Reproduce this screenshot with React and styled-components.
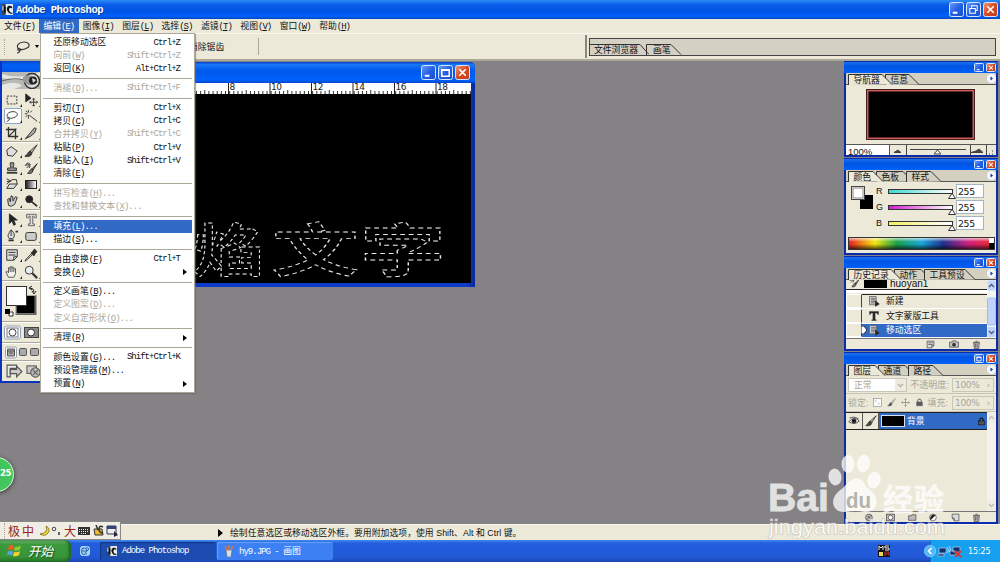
import React from 'react'
import styled, { createGlobalStyle } from 'styled-components';

const MENUS = [['文件', 'F'], ['编辑', 'E'], ['图像', 'I'], ['图层', 'L'], ['选择', 'S'], ['滤镜', 'T'], ['视图', 'V'], ['窗口', 'W'], ['帮助', 'H']];

// label, mnemonic, tail, shortcut, flags (d disabled, a active, m submenu)
const EDIT_MENU = [
    ['还原移动选区', '', '', 'Ctrl+Z'],
    ['向前', 'W', '', 'Shift+Ctrl+Z', 'd'],
    ['返回', 'K', '', 'Alt+Ctrl+Z'],
    null,
    ['消褪', 'D', '...', 'Shift+Ctrl+F', 'd'],
    null,
    ['剪切', 'T', '', 'Ctrl+X'],
    ['拷贝', 'C', '', 'Ctrl+C'],
    ['合并拷贝', 'Y', '', 'Shift+Ctrl+C', 'd'],
    ['粘贴', 'P', '', 'Ctrl+V'],
    ['粘贴入', 'I', '', 'Shift+Ctrl+V'],
    ['清除', 'E', '', ''],
    null,
    ['拼写检查', 'H', '...', '', 'd'],
    ['查找和替换文本', 'X', '...', '', 'd'],
    null,
    ['填充', 'L', '...', '', 'a'],
    ['描边', 'S', '...', ''],
    null,
    ['自由变换', 'F', '', 'Ctrl+T'],
    ['变换', 'A', '', '', 'm'],
    null,
    ['定义画笔', 'B', '...', ''],
    ['定义图案', 'D', '...', '', 'd'],
    ['定义自定形状', 'O', '...', '', 'd'],
    null,
    ['清理', 'R', '', '', 'm'],
    null,
    ['颜色设置', 'G', '...', 'Shift+Ctrl+K'],
    ['预设管理器', 'M', '...', ''],
    ['预置', 'N', '', '', 'm'],
];

const CHANNELS = [['R', '#40d8d0'], ['G', '#d020d0'], ['B', '#f4f060']];

const ICONS = {
    marquee: <rect x="2.5" y="3.5" width="11" height="9" strokeDasharray="2.2 1.4" />,
    move: <><path d="M2 1v9l6-4z" fill="#222" /><path d="M11 6v9M6.500 10.500h9M9.500 7.500L11 6l1.500 1.500M9.500 13.500L11 15l1.500-1.500M8 9l-1.500 1.500L8 12M14 9l1.500 1.500L14 12" /></>,
    lasso: <path d="M4 10C0 7 4 3 9 3s7 4 3 6-6 2-7 1-3 0-2 1 3-1 2 1-2 2-3 2" />,
    wand: <path d="M6 7l9 7M5 1v3M5 7v4M1 5.500h3M7 4l2-2M2 2l2 2M2 9l2-2" />,
    crop: <path d="M4 1v11h11M1 4h11v11M5 11l8-8" strokeWidth="1.5" />,
    slice: <><path d="M2 14L12 2l2 1-2 5-5 4z" fill="#aaa" /><path d="M1 15l4-3" /></>,
    heal: <path d="M2 7l5-4 7 5-5 6-6-1z" fill="#ddd" />,
    brush: <><path d="M15 1L7 8l2 2z" fill="#ccc" /><path d="M7 8c-3 1-2 4-6 6 4 1 8 0 8-4z" fill="#444" /></>,
    stamp: <><path d="M6 2h4v3L9 8h4v3H3V8h4L6 5z" fill="#999" /><path d="M2 13.500h12" strokeWidth="2" /></>,
    history: <><path d="M15 3l-6 6 1 2zM9 9c-3 1-2 3-5 5 3 1 6 0 6-3z" fill="#777" /><path d="M2 4c4-4 6 0 4 4M1 5l5-1M3 8l4-4" /></>,
    eraser: <><path d="M5 8h9l-4 5H2z" fill="#ddd" /><path d="M2 8l6-5h5l1 5M2 2l5 3M2 5h4" /></>,
    smudge: <path d="M4 13l-1-7 2-1 1 4 1-7 2 1v5l3-5 2 1-3 8-4 2-3-1z" fill="#ccc" />,
    dodge: <><circle cx="6" cy="6" r="4" fill="#222" /><path d="M9 9l6 5" strokeWidth="2" /></>,
    pathsel: <path d="M5 1v11l3-3 2 5 2-1-2-5h4z" fill="#222" />,
    type: <path d="M3 1.500h11v4h-2l-1-2h-1v9h2v2H5v-2h2v-9H6l-1 2H3z" fill="#ddd" stroke="#666" />,
    pen: <><path d="M7 1c5 4 4 8 2 10H5C2 8 4 5 7 1zM7 1v7" fill="#ddd" /><path d="M4 13h6M12 3h3" strokeWidth="2" /></>,
    shape: <rect x="2" y="4" width="12" height="9" rx="2" fill="#ccc" />,
    note: <path d="M2 2h12v8l-4 4H2zM14 10h-4v4M4 5h8M4 8h8" fill="#ddd" />,
    dropper: <><path d="M9 6l3-4 2 2-3 4z" fill="#222" strokeWidth="2" /><path d="M8 5l4 4M9 6l-6 6-2 3 3-2 6-6" /></>,
    hand: <path d="M4 14l-3-6 1-1 2 2V3l2 1V2h2v2l1-2 1 1v2l2-1v6l-2 4zM6 4v4M8 4v4M10 5v3" fill="#f4f4ee" stroke="#555" />,
    zoom: <><circle cx="6" cy="6" r="4.500" fill="#e8f0f0" /><path d="M9.500 9.500L15 15" strokeWidth="2.500" /></>,
    doc: <><path d="M2 2h9v11H2zM4 4.500h6M4 6.500h6M4 8.500h6M4 10.500h5" fill="#ccc" stroke="#666" /><path d="M10 8v7l5-3z" fill="#222" /></>,
    bigT: <path d="M2 2h12v4h-1l-1-2H9.500v9H11v1H5v-1h1.500V4H4L3 6H2z" fill="#222" strokeWidth="0.500" />,
    camera: <><path d="M1 5h4l1-2h5l1 2h3v8H1z" fill="#ccc" /><circle cx="8" cy="9" r="2.500" fill="#333" /></>,
    trash: <path d="M3 5h10l-1 10H4zM2 4h12M6 2h4M6 7v6M9 7v6" fill="#bbb" />,
    newdoc: <path d="M2 2h12v12H6V9H2zM2 9l4 5" fill="#ddd" />,
    folder: <path d="M1 5h5l1-2h7v10H1z" fill="#bbb" />,
    mask: <><rect x="1" y="2" width="14" height="12" fill="#bbb" /><circle cx="8" cy="8" r="4" fill="#fff" /></>,
    adjust: <><circle cx="7" cy="8" r="6" fill="#fff" /><path d="M3 12A6 6 0 0 1 11 4z" fill="#111" /></>,
    fx: <><circle cx="7" cy="8" r="6" fill="#bbb" /><path d="M3 12l8-8M5 5l5 6" /></>,
    lock: <><path d="M5 7V4q3-4 6 0v3" strokeWidth="1.800" /><rect x="3" y="7" width="10" height="7" fill="#555" /></>,
    eye: <><path d="M1 9q7-8 14-1-6 6-14 1zM2 4q6-3 12 1" fill="#fff" /><circle cx="8" cy="8" r="2.800" fill="#111" /></>,
    cross: <path d="M8 1v14M1 8h14M6 3l2-2 2 2M6 13l2 2 2-2M3 6L1 8l2 2M13 6l2 2-2 2" />,
    checker: <><rect x="1" y="1" width="14" height="14" fill="#fff" /><path d="M3 3h4v4H3zM8 8h4v4H8z" fill="#ddd" stroke="none" /></>,
    jump: <><path d="M1 2h9v3H4v8H1z" fill="#eee" /><path d="M4 6h6V3l5 5-5 5v-3H4z" fill="#ccc" /></>,
    flower: <><rect x="1" y="2" width="10" height="8" fill="#ccc" /><circle cx="10" cy="9" r="5" fill="#bbb" /><path d="M7 6l6 6M13 6l-6 6" /></>,
};

const Icon = ({ name, size = 13, color = '#333' }) => (
    <svg width={size} height={size} viewBox="0 0 16 16" fill="none" stroke={color} strokeWidth="1.100">{ICONS[name]}</svg>
)

const AppLogo = ({ size }) => (
    <svg width={size} height={size} viewBox="0 0 12 12">
        <rect width="12" height="12" fill="#dfe6ee" />
        <path d="M0 0h4v12H0z" fill="#345" />
        <path d="M2 2v7l2 1V3zM11 3C7 0 4 4 6 8q2 4 6 2L9 9Q7 7 8 5q1-2 3 0z" fill="#111" />
        <path d="M1 2v5M9 5v3" stroke="#fff" />
    </svg>
)

const WinButtons = ({ kinds, small }) => (
    <Buttons>
        {kinds.map((kind) => (
            <WinButton key={kind} $close={kind === 'close'} $small={small}>
                <svg width="100%" height="100%" viewBox="0 0 14 14" fill="none" stroke="#fff" strokeWidth="1.600">
                    {kind === 'min' && <path d="M3 10.500h5" strokeWidth="2.200" />}
                    {kind === 'max' && <path d="M3 4h8v7H3zM3 4.500h8" />}
                    {kind === 'restore' && <path d="M5 5V3h6v5H9M3 6h6v5H3z" strokeWidth="1.100" />}
                    {kind === 'close' && <path d="M3.500 3.500l7 7M10.500 3.500l-7 7" strokeWidth="1.900" />}
                </svg>
            </WinButton>
        ))}
    </Buttons>
)

const Mnemonic = ({ letter }) => letter ? <Latin>(<u>{letter}</u>)</Latin> : null

const Palette = ({ top, height, tabs, button = 'min', children }) => (
    <PaletteFrame $top={top} $height={height}>
        <PaletteTitle><WinButtons kinds={[button, 'close']} small /></PaletteTitle>
        <Tabs>
            {tabs.map(([label, width], i) => (
                <Tab key={label} $width={width} $on={i === 0}>
                    <svg width={width + 11} height="11" fill={i === 0 ? '#ece9d8' : '#d4d0c0'} stroke="#333"><path d={`M0.500 11V.5H${width - 2}L${width + 8} 10.500`} /></svg>
                    <span>{label}</span>
                </Tab>
            ))}
            <Flyout>
                <svg width="9" height="9"><circle cx="4.500" cy="4.500" r="4.500" fill="#f4f8ff" /><path d="M3.500 2.500v4l2.500-2z" fill="#103090" /></svg>
            </Flyout>
        </Tabs>
        {children}
    </PaletteFrame>
)

const Toolbox = () => {
    const group = (names, height) => (
        <ToolGroup $height={height}>
            {names.map((name, i) => <Tool key={name} $on={name === 'lasso'} $mark={i % 2 === 0}><Icon name={name} size={14} /></Tool>)}
        </ToolGroup>
    )
    return (
        <ToolFrame>
            <ToolTitle />
            <Banner>
                <svg width="38" height="17" viewBox="0 0 38 17">
                    <rect width="38" height="17" fill="#b8b8b4" />
                    <path d="M0 2q18 6 38-2v4Q18 10 0 6zM0 13q14-5 20 1l-8 3H0z" fill="#e6e6e2" />
                    <path d="M0 9q12-4 22-1" stroke="#666" fill="none" />
                    <circle cx="30" cy="9" r="7.500" fill="#ddd" stroke="#333" strokeWidth="1.500" />
                    <path d="M21 5q8-5 15 5-8 7-15-1z" fill="#999" />
                    <circle cx="31" cy="8.500" r="4" fill="#222" /><path d="M30 6l4 2-3 3z" fill="#ddd" />
                </svg>
            </Banner>
            {group(['marquee', 'move', 'lasso', 'wand', 'crop', 'slice'], 52)}
            {group(['heal', 'brush', 'stamp', 'history', 'eraser', 'grad', 'smudge', 'dodge'], 68)}
            {group(['pathsel', 'type', 'pen', 'shape'], 36)}
            {group(['note', 'dropper', 'hand', 'zoom'], 35)}
            <ToolGroup $height={41}>
                <svg width="36" height="37" viewBox="0 0 36 37">
                    <rect x="14" y="12.500" width="20" height="19" fill="#000" stroke="#666" />
                    <rect x="14" y="12.500" width="19" height="18" fill="none" stroke="#eee" strokeWidth=".5" />
                    <rect x="4.500" y="3.500" width="20" height="19" fill="#fff" stroke="#333" />
                    <path d="M28 5q4 0 4 4M30 3l-3 2 3 2M30 8l2 3 2-3" stroke="#222" fill="none" />
                    <path d="M7 29h4v4H7z" fill="#fff" stroke="#333" /><path d="M3 26h5v5H3z" fill="#000" />
                </svg>
            </ToolGroup>
            <ToolGroup $height={21}>
                <svg width="38" height="17" viewBox="0 0 38 17">
                    <rect x="2.500" y="2" width="16" height="13" rx="2" fill="#fff" stroke="#91a0b5" /><rect x="5" y="4" width="11" height="9" fill="#fff" stroke="#778" /><circle cx="10.500" cy="8.500" r="3.500" fill="#fff" stroke="#444" />
                    <rect x="22.500" y="3.500" width="14" height="10" fill="#888" stroke="#444" /><circle cx="29" cy="8.500" r="3.500" fill="#fff" stroke="#333" />
                </svg>
            </ToolGroup>
            <ToolGroup $height={18}>
                <svg width="38" height="14" viewBox="0 0 38 14" fill="#aaa" stroke="#555">
                    <rect x="3.500" y="2" width="11" height="11" rx="1.500" fill="#fff" stroke="#91a0b5" /><path d="M5.500 4h7v7h-7zM5.500 6h7M7 8h4" />
                    <rect x="17.500" y="3.500" width="7" height="7" rx="1" /><rect x="28.500" y="3.500" width="8" height="7" rx="1" />
                </svg>
            </ToolGroup>
            <JumpRow><Icon name="jump" size={17} color="#555" /><Icon name="flower" size={15} color="#555" /></JumpRow>
        </ToolFrame>
    )
}

const EditMenu = () => (
    <Dropdown>
        {EDIT_MENU.map((row, i) => {
            if (!row) return <Separator key={i} />
            const [label, letter, tail, shortcut, flag] = row
            return (
                <DropItem key={i} $flag={flag}>
                    <span>{label}<Mnemonic letter={letter} /><Latin>{tail}</Latin></span>
                    <Shortcut>{shortcut}</Shortcut>
                    {flag === 'm' && <svg width="4" height="6"><path d="M0 0v6l4-3z" fill="#000" /></svg>}
                </DropItem>
            )
        })}
    </Dropdown>
)

const Ruler = () => (
    <RulerBar>
        <svg width="428" height="11">
            {Array.from({ length: 103 }, (_, i) => {
                const x = 20.500 + i * 4.150 - 4
                const tall = (i % 10) === 5
                return <path key={i} d={`M${x} ${tall ? 7 : 8}V11`} stroke="#333" />
            })}
            {[8, 10, 12, 14, 16, 18].map((n, i) => (
                <g key={n}>
                    <path d={`M${185.500 + i * 41.500} 0V11`} stroke="#222" />
                    <text x={186.500 + i * 41.500} y="6.500" fontSize="9" fontFamily="DejaVu Sans" letterSpacing="-.6" fill="#222">{n}</text>
                </g>
            ))}
        </svg>
    </RulerBar>
)

const Document = () => (
    <DocFrame>
        <DocTitle><WinButtons kinds={['min', 'max', 'close']} /></DocTitle>
        <Ruler />
        <Canvas>
            <svg width="428" height="189" viewBox="43 94 428 189">
                <g fill="none" stroke="#e8e8e8" strokeWidth=".9" strokeDasharray="3.200 2.600" fontFamily="Noto Sans CJK SC, sans-serif" fontWeight="700" fontSize="58">
                    <text transform="translate(193 271) scale(1.220 .98)">焰</text>
                    <text transform="translate(272 271) scale(1.490 .98)">文</text>
                    <text transform="translate(360 271) scale(1.480 .98)">字</text>
                </g>
            </svg>
        </Canvas>
    </DocFrame>
)

const Navigator = () => (
    <Palette top={61} height={96} tabs={[['导航器', 36], ['信息', 26]]}>
        <NavBody><NavThumb /></NavBody>
        <NavFooter>
            <ZoomField><span>100%</span></ZoomField>
            <svg width="104" height="11" fill="#444" stroke="#444">
                <path d="M4 7.500h7L8 5zM16.500 0v11M80.500 0v11M81 7.500h12L89 4l-3 2z" />
                <path d="M20 4.500h56" /><path d="M44 9l3.500-4L51 9z" fill="#fff" />
                <path d="M96.500 0v11" /><path d="M99 9h1M102 9h1M102 6h1" />
            </svg>
        </NavFooter>
    </Palette>
)

const ColorPalette = () => (
    <Palette top={158} height={97} tabs={[['颜色', 27], ['色板', 29], ['样式', 27]]}>
        <ColorBody>
            <svg width="28" height="30">
                <rect x="14" y="12" width="13" height="14" fill="#000" /><rect x="5.500" y="3.500" width="13" height="13" fill="#fff" stroke="#444" />
                <rect x="7" y="5" width="10" height="10" fill="#fff" stroke="#888" />
            </svg>
            <Channels>
                {CHANNELS.map(([name, color]) => (
                    <Channel key={name}>
                        <span>{name}</span>
                        <Track $color={color}><svg width="8" height="6"><path d="M.5 5.500L4 .5l3.500 5z" fill="#fff" stroke="#333" /></svg></Track>
                        <Value>255</Value>
                    </Channel>
                ))}
            </Channels>
        </ColorBody>
        <Spectrum><i /></Spectrum>
    </Palette>
)

const Scroll = ({ thumb, height }) => (
    <ScrollBar>
        <svg width="9" height={height}>
            <rect width="9" height={height} fill={thumb ? '#f5f5f0' : '#f2f1ec'} />
            {thumb && <rect x=".5" y={height - 40} width="8" height="27" rx="1" fill="#c1d3fb" stroke="#a4bbf0" />}
            <rect x=".5" y=".5" width="8" height="10" rx="1" fill={thumb ? '#c1d3fb' : '#eeede5'} />
            <rect x=".5" y={height - 11} width="8" height="10" rx="1" fill={thumb ? '#c1d3fb' : '#eeede5'} />
            <path d={`M2 7l2.500-2.500L7 7M2 ${height - 7}l2.500 2.500L7 ${height - 7}`} fill="none" stroke={thumb ? '#4d6185' : '#c0bfb5'} strokeWidth="1.500" />
        </svg>
    </ScrollBar>
)

const History = () => (
    <Palette top={256} height={95} tabs={[['历史记录', 45], ['动作', 29], ['工具预设', 43]]}>
        <Split $height={58}>
            <List>
                <Snapshot><SnapBox><Icon name="history" size={11} /></SnapBox><b /><span>huoyan1</span></Snapshot>
                {[['doc', '新建'], ['bigT', '文字蒙版工具'], ['doc', '移动选区']].map(([icon, label], i) => (
                    <State key={label} $on={i === 2}><Check />{i === 2 && <Pointer><svg width="6" height="8"><path d="M0 0h3l3 4-3 4H0z" fill="#fff" stroke="#222" /></svg></Pointer>}<Icon name={icon} size={12} /><span>{label}</span></State>
                ))}
            </List>
            <Scroll thumb height={58} />
        </Split>
        <Footer $gap={12}><Icon name="note" size={9} /><Icon name="camera" size={10} /><Icon name="trash" size={9} /></Footer>
    </Palette>
)

const Layers = () => (
    <Palette top={352} height={172} button="max" tabs={[['图层', 29], ['通道', 29], ['路径', 27]]}>
        <LayerOptions>
            <Select><span>正常</span><svg width="9" height="12"><path d="M2 5l2.500 2.500L7 5" fill="none" stroke="#b8b5a8" strokeWidth="1.500" /></svg></Select>
            <Dim>不透明度:</Dim>
            <Percent>100%<i>›</i></Percent>
        </LayerOptions>
        <LayerOptions>
            <Dim>锁定:</Dim>
            <LockIcons><Icon name="checker" size={9} color="#888" /><Icon name="brush" size={9} color="#888" /><Icon name="cross" size={9} color="#777" /><Icon name="lock" size={9} color="#777" /></LockIcons>
            <Dim>填充:</Dim>
            <Percent>100%<i>›</i></Percent>
        </LayerOptions>
        <Split $height={99}>
            <List>
                <Layer>
                    <Cell><Icon name="eye" size={12} /></Cell>
                    <Cell><Icon name="brush" size={12} /></Cell>
                    <b /><span>背景</span><Icon name="lock" size={9} color="#111" />
                </Layer>
            </List>
            <Scroll height={99} />
        </Split>
        <Footer $gap={11}>{['fx', 'mask', 'folder', 'adjust', 'newdoc', 'trash'].map((name) => <Icon key={name} name={name} size={9} />)}</Footer>
    </Palette>
)

const Watermark = () => (
    <Mark>
        <svg width="190" height="100" viewBox="0 0 190 100" fill="#fff" fontFamily="Liberation Sans, sans-serif" fontWeight="700">
            <text x="3" y="66" fontSize="39" textLength="61" lengthAdjust="spacingAndGlyphs" stroke="#fff" strokeWidth=".8">Bai</text>
            <ellipse cx="70" cy="32" rx="6.500" ry="8.500" transform="rotate(-10 70 32)" />
            <ellipse cx="83" cy="19" rx="6.500" ry="9" />
            <ellipse cx="98.500" cy="18.500" rx="6.500" ry="9" transform="rotate(10 98.500 18.500)" />
            <ellipse cx="109" cy="35" rx="6.500" ry="8.500" transform="rotate(15 109 35)" />
            <path d="M91 33q7 0 10 9 12 7 10.500 16-2 10-12 9-9-2-18 0-12 1-13.500-9 0-9 10-15 6-8 13-10z" />
            <text x="81" y="63" fontSize="22" fill="#a3a29e" textLength="25" lengthAdjust="spacingAndGlyphs">du</text>
            <text x="118" y="65" fontSize="30" fontFamily="Noto Sans CJK SC, sans-serif" textLength="61" stroke="#fff" strokeWidth=".6">经验</text>
            <text x="4" y="89" fontSize="20" fontWeight="400" textLength="176" lengthAdjust="spacingAndGlyphs" stroke="#bbb8b0" strokeWidth="1.200" paintOrder="stroke">jingyan.baidu.com</text>
        </svg>
    </Mark>
)

const InputBar = () => (
    <Ime>
        <Grip />
        <ImeText $color="#8c2a20">极</ImeText>
        <ImeText $color="#9a2018">中</ImeText>
        <svg width="84" height="14" viewBox="0 0 84 14">
            <path d="M10 2q3 7-6 8 5 3 8-1t-2-7z" fill="#f4dc40" stroke="#665500" strokeWidth=".7" />
            <circle cx="18" cy="5" r="1.800" fill="none" stroke="#444" /><path d="M23 8v3" stroke="#333" strokeWidth="1.500" />
            <text x="28" y="11.500" fontSize="12" fill="#9a2018" fontFamily="Noto Sans CJK SC">大</text>
            <rect x="42" y="3" width="12" height="8" fill="#333" /><path d="M43 5.500h10M43 7.500h10M45 9.500h6" stroke="#eee" strokeDasharray="1 1" />
            <path d="M58 5h8l1 6h-8z" fill="#e8ba38" stroke="#333" /><path d="M60 1l2 5M67 3q-4-2-4 2t4 4" stroke="#333" fill="none" strokeWidth="1.500" />
            <path d="M71 2h9v8h-9z" fill="#eee" stroke="#335" /><path d="M71 2h9v3h-9z" fill="#347" /><path d="M78 7v6l4-2z" fill="#223" />
        </svg>
    </Ime>
)

const App = () => (
    <Screen>
        <Reset />
        <TitleBar><AppLogo size={11} /><b>Adobe Photoshop</b><WinButtons kinds={['min', 'restore', 'close']} /></TitleBar>
        <MenuBar>
            {MENUS.map(([label, letter]) => <MenuItem key={label} $on={letter === 'E'}>{label}<Mnemonic letter={letter} /></MenuItem>)}
        </MenuBar>
        <Options>
            <OptionTool><Grip /><Icon name="lasso" size={16} /><svg width="4" height="3"><path d="M0 0h4L2 3z" /></svg></OptionTool>
            <OptionText>消除锯齿</OptionText>
            <Well>
                <WellTab>文件浏览器</WellTab>
                <svg width="9" height="11" stroke="#333" fill="none"><path d="M0 .5l9 10M6.500 11V.5H9" /></svg>
                <WellTab>画笔</WellTab>
                <svg width="11" height="11" stroke="#333" fill="none"><path d="M0 .5l10 10" /></svg>
            </Well>
        </Options>
        <Workspace />
        <Status>
            <svg width="5" height="8"><path d="M0 0v8l5-4z" /></svg>
            <span>绘制任意选区或移动选区外框。要用附加选项，使用 Shift、Alt 和 Ctrl 键。</span>
        </Status>
        <Taskbar>
            <Start>
                <svg width="15" height="14" viewBox="0 0 15 14"><path d="M2 2q3-2 5 0L6 6Q4 5 1 6z" fill="#f05a28" /><path d="M8 2.500q3 1 6-1l-1 4q-3 2-6 1z" fill="#8ccc30" /><path d="M1 7.500q3-1 5 0l-1 4Q3 10 0 11z" fill="#58a4f8" /><path d="M7 8q3 1 6-1l-1 4q-3 2-6 1z" fill="#fcd430" /></svg>
                <span>开始</span>
            </Start>
            <Quick><svg width="12" height="12"><rect x="1" y="1" width="10" height="10" rx="3" fill="#a8d4f8" /><path d="M3 6h5q0-3-3-3T2.500 6.500 5 9.500t3-1M7 2l3 2-4 4" stroke="#2860b0" fill="none" /></svg></Quick>
            <Task $on><AppLogo size={10} /><span>Adobe Photoshop</span></Task>
            <Task>
                <svg width="10" height="12"><path d="M2 5h6l-1 7H3z" fill="#d8e0e8" stroke="#555" strokeWidth=".5" /><path d="M3 5L1 1M5 5V0M7 5l2-4" stroke="#e07838" strokeWidth="1.500" /></svg>
                <span>hy9.JPG - <em>画图</em></span>
            </Task>
            <MsIcon><svg width="12" height="12" viewBox="0 0 12 12"><path d="M0 0h12v12H0z" fill="#111" /><path d="M1 5V1l2 2 2-2v4M11 1H7v2h4v2H7" stroke="#eee" fill="none" /><path d="M1 7h4v4H1z" fill="#e8d860" /><path d="M7 11V7h4v4M7 9h4" stroke="#c03030" fill="none" /></svg></MsIcon>
            <Tray>
                <svg width="12" height="14"><circle cx="6" cy="7" r="5.800" fill="#54b8f8" stroke="#b8e4ff" strokeWidth=".5" /><path d="M7.500 4L4.500 7l3 3" stroke="#fff" strokeWidth="1.600" fill="none" /></svg>
                <svg width="27" height="13"><path d="M2 3h7v5H2zM1 9h6v2H1zM16 2h7v5h-7zM13 6h6v4h-6z" fill="#14306c" stroke="#b8c8e0" strokeWidth=".7" /><path d="M10 2q3 3 0 6M12 1q3 3 0 6" stroke="#dfefff" fill="none" strokeWidth=".7" /><path d="M18 6l6 6M24 6l-6 6" stroke="#f02818" strokeWidth="1.700" /></svg>
                <span>15:25</span>
            </Tray>
        </Taskbar>
        <Document />
        <Toolbox />
        <EditMenu />
        <Navigator />
        <ColorPalette />
        <History />
        <Layers />
        <Bubble>25</Bubble>
        <InputBar />
        <Watermark />
    </Screen>
)

export default App


const Reset = createGlobalStyle`
* { box-sizing: border-box; }
body { margin: 0; overflow: hidden; }
svg { display: block; flex: none; }
`;
const Screen = styled.div`
position: relative;
width: 1000px;
height: 562px;
overflow: hidden;
display: flex;
flex-direction: column;
background: #848284;
color: #111;
font: 8.8px/12px "Liberation Sans", "Noto Sans CJK SC", sans-serif;
white-space: nowrap;
`;
const TitleBar = styled.div`
height: 19px;
flex: none;
display: flex;
align-items: center;
padding-left: 2px;
gap: 3px;
background: linear-gradient(#2a8cf8, #0a5ce8 25%, #0054e4 60%, #0062fc 85%, #0046c0);
color: #fff;

b {
    font: bold 10.5px/14px "Liberation Mono", monospace;
    letter-spacing: -.5px;
    text-shadow: 1px 1px #0a3a90;
}
`;
const Buttons = styled.div`
margin-left: auto;
display: flex;
gap: 2px;
margin-right: 2px;
`;
const WinButton = styled.div`
width: ${(p) => p.$small ? '10px' : '15px'};
height: ${(p) => p.$small ? '9.5px' : '15px'};
border: ${(p) => p.$small ? '.5px' : '1px'} solid #d8e4fc;
border-radius: ${(p) => p.$small ? '1.5px' : '2.5px'};
background: ${(p) => p.$close ? 'linear-gradient(135deg, #f09878, #d84820 50%, #c04020)' : 'linear-gradient(135deg, #6c9cf8, #2460e4 50%, #1c50cc)'};
`;
const MenuBar = styled.div`
height: 14px;
flex: none;
display: flex;
background: #ece9d8;
`;
const MenuItem = styled.div`
width: 39.4px;
padding-left: 4px;
line-height: 14px;
background: ${(p) => p.$on ? '#316ac5' : 'none'};
color: ${(p) => p.$on ? '#fff' : '#111'};
`;
const Latin = styled.span`
font: 9px/12px "Liberation Mono", monospace;
letter-spacing: -.98px;
`;
const Options = styled.div`
height: 28px;
flex: none;
display: flex;
align-items: center;
background: #ece9d8;
border-top: 1px solid #f8f7f0;
border-bottom: 2px solid #aca899;
`;
const OptionTool = styled.div`
width: 184px;
display: flex;
align-items: center;
padding-left: 4px;
gap: 4px;

svg:nth-child(2) { margin-left: 4px; }
`;
const Grip = styled.div`
width: 3px;
height: 16px;
flex: none;
border-left: 1px dotted #aaa694;
`;
const OptionText = styled.div`
width: 403px;
height: 23px;
line-height: 25px;
padding-left: 5px;
border-right: 2px solid #8a887c;
background: linear-gradient(#aca899, #aca899) 74px 3px / 1px 17px no-repeat;
`;
const Well = styled.div`
margin: 0 4px 0 2px;
flex: 1;
height: 18px;
padding-top: 5px;
display: flex;
background: #d4d0c4;
border: 1px solid #444;
`;
const WellTab = styled.div`
padding: 0 0 0 4px;
width: ${(p) => p.children.length > 2 ? '50px' : '22px'};
line-height: 11px;
border-top: 1px solid #333;
height: 11px;
`;
const Workspace = styled.div`
flex: 1;
background: #848284;
`;
const Status = styled.div`
height: 16px;
flex: none;
display: flex;
align-items: center;
gap: 7px;
padding-left: 218px;
background: #ece9d8;
border-top: 1px solid #f8f7f0;

span { letter-spacing: .06px; }
`;
const Taskbar = styled.div`
height: 22px;
flex: none;
display: flex;
align-items: center;
background: linear-gradient(#4088f0, #245edc 15%, #2158d6 80%, #1c48b0);
color: #fff;
`;
const Start = styled.div`
width: 71px;
height: 22px;
display: flex;
align-items: center;
gap: 6px;
padding-left: 7px;
border-radius: 0 6px 6px 0;
background: linear-gradient(#70b870, #3c9a3c 20%, #389438 75%, #287428);
box-shadow: inset -2px 0 3px #1c6020;

span {
    font: italic 12.5px/18px "Noto Sans CJK SC", sans-serif;
    text-shadow: 1px 1px 1px #184818;
}
`;
const Quick = styled.div`
width: 29px;
padding-left: 8px;
`;
const Task = styled.div`
width: 116px;
height: 18px;
margin-right: 1px;
display: flex;
align-items: center;
gap: 5px;
padding-left: 7px;
border-radius: 2px;
background: ${(p) => p.$on ? '#1c4cb0' : '#3c80f4'};
box-shadow: ${(p) => p.$on ? 'inset 1px 1px 1px #103480' : 'inset 1px 1px 1px #68a4fc'};
font: 9px/12px "Liberation Mono", monospace;
letter-spacing: -.98px;

em { font: 8.8px "Noto Sans CJK SC", sans-serif; letter-spacing: 0; }
`;
const MsIcon = styled.div`
margin-left: auto;
`;
const Tray = styled.div`
width: 76px;
height: 22px;
margin-left: 34px;
display: flex;
align-items: center;
gap: 1px;
background: linear-gradient(90deg, transparent 6px, #0a3c9c 6px, transparent 7px), linear-gradient(90deg, transparent 6px, #18a0f0 6px);

span { font: 8px "DejaVu Sans", sans-serif; margin-left: 3px; letter-spacing: -.1px; }
`;

// floating windows
const DocFrame = styled.div`
position: absolute;
left: 40px;
top: 62px;
width: 435px;
height: 225px;
display: flex;
flex-direction: column;
padding: 0 4px 4px 3px;
background: linear-gradient(90deg, #0c3cc8 98%, #0828a0);
border-radius: 5px 5px 0 0;
`;
const DocTitle = styled.div`
height: 21px;
margin: 0 -4px 0 -3px;
flex: none;
display: flex;
align-items: center;
padding-right: 3px;
border-radius: 5px 5px 0 0;
background: linear-gradient(#0a3cc0, #1878f8 12%, #0058ec 40%, #0062fc 85%, #0048d0);
`;
const RulerBar = styled.div`
height: 11px;
flex: none;
background: #fff;
overflow: hidden;
`;
const Canvas = styled.div`
height: 189px;
overflow: hidden;
background: #000;
`;
const ToolFrame = styled.div`
position: absolute;
left: 0;
top: 61px;
width: 42px;
height: 322px;
padding: 0 2px;
display: flex;
flex-direction: column;
background: #ece9d8;
border: solid #0a34c0;
border-width: 0 0 2px 2px;
`;
const ToolTitle = styled.div`
height: 11px;
margin: 0 -2px;
flex: none;
background: linear-gradient(#0848c8, #0060f8 40%, #0054e8);
`;
const Banner = styled.div`
height: 18px;
margin: 0 -2px;
flex: none;
`;
const ToolGroup = styled.div`
height: ${(p) => p.$height}px;
margin: 0 -2px;
padding: 1px 0 0;
display: flex;
flex: none;
flex-wrap: wrap;
align-content: space-evenly;
border-bottom: 1px solid #aca899;
box-shadow: 0 1px #fff;
`;
const Tool = styled.div`
width: 18px;
height: 16px;
margin-left: ${(p) => p.$mark ? '2px' : '1px'};
padding-left: 1px;
display: flex;
align-items: center;
justify-content: center;
border: 1px solid ${(p) => p.$on ? '#90a8c8' : 'transparent'};
border-radius: 2px;
background: ${(p) => p.$on ? '#fff' : 'none'};

/* gradient tool has no drawing of its own */
svg:empty {
    width: 12px;
    height: 9px;
    border: 1px solid #222;
    background: linear-gradient(90deg, #222, #fff);
}
&::after {
    content: '';
    align-self: flex-end;
    margin-left: -2px;
    border: solid transparent;
    border-width: 3px 0 0 3px;
    border-bottom: 0;
    border-right: 2px solid #222;
}
`;
const JumpRow = styled.div`
display: flex;
align-items: center;
gap: 3px;
padding-left: 2px;
flex: 1;
`;
const Dropdown = styled.div`
position: absolute;
left: 40px;
top: 33px;
width: 155px;
height: 360px;
padding: 2px 2px 0;
background: #fff;
border: 1px solid #aca899;
box-shadow: 1px 1px 1px #6668;
`;
const DropItem = styled.div`
height: 13.15px;
display: flex;
align-items: center;
padding: 0 4px 0 10.5px;
color: ${(p) => ({ d: '#aca899', a: '#fff' })[p.$flag] || '#111'};
background: ${(p) => p.$flag === 'a' ? '#316ac5' : 'none'};
`;
const Shortcut = styled(Latin)`
margin-left: auto;
margin-right: 8px;

& + svg { margin-right: 1px; }
`;
const Separator = styled.div`
height: 6.5px;
padding: 0;
background: linear-gradient(#aca899, #aca899) 0 3px / 100% 1px no-repeat;
`;
const PaletteFrame = styled.div`
position: absolute;
left: 844px;
top: ${(p) => p.$top}px;
width: 154px;
height: ${(p) => p.$height}px;
display: flex;
flex-direction: column;
background: #ece9d8;
border: solid #0a2ca8;
border-width: 1px 2px 2px;
`;
const PaletteTitle = styled.div`
height: 11px;
flex: none;
display: flex;
align-items: center;
margin: 0 -2px;
background: linear-gradient(#1c70f0, #0054e4 40%, #0060f8);
`;
const Tabs = styled.div`
height: 12px;
flex: none;
display: flex;
padding: 1px 0 0 2px;
background: #d4d0c0;
border-bottom: 1px solid #555;
`;
const Tab = styled.div`
position: relative;
width: ${(p) => p.$width}px;
height: 11px;
margin-right: 1px;
z-index: ${(p) => p.$on ? 2 : 1};

span {
    position: absolute;
    left: 5.5px;
    top: 0;
    line-height: 12px;
}
`;
const Flyout = styled.div`
margin-left: auto;
`;
const NavBody = styled.div`
flex: 1;
display: flex;
align-items: center;
justify-content: center;
`;
const NavThumb = styled.div`
width: 109px;
height: 51px;
margin: 0 0 0 -1px;
background: #000;
border: 1px solid #402020;
box-shadow: inset 0 0 0 1.5px #d05858;
`;
const NavFooter = styled.div`
height: 11px;
flex: none;
display: flex;
border-top: 1px solid #555;
overflow: hidden;
`;
const ZoomField = styled.div`
width: 44px;
background: #fff;
border-right: 1px solid #555;
padding-left: 2px;
font-size: 9.5px;
line-height: 13px;
`;
const ColorBody = styled.div`
flex: 1;
display: flex;
padding-top: 1px;
`;
const Channels = styled.div`
flex: 1;
`;
const Channel = styled.div`
height: 16.2px;
display: flex;
align-items: center;
font-size: 9px;

> span { width: 14px; padding-left: 2px; }
`;
const Track = styled.div`
width: 65px;
height: 5px;
border: 1px solid #333;
background: linear-gradient(90deg, ${(p) => p.$color}, #fff);

svg { margin: 3px 0 0 59px; }
`;
const Value = styled.div`
width: 28px;
height: 14px;
margin-left: 3px;
padding-left: 1px;
font: 9.3px/13px "DejaVu Sans", sans-serif;
letter-spacing: -.3px;
background: #fff;
border: 1px solid #a0b4c4;
`;
const Spectrum = styled.div`
height: 13px;
margin: 0 1px 3px 2px;
border: 1px solid #333;
background: linear-gradient(#fffa, #fff0 35%, #0000 55%, #000a), linear-gradient(90deg, #e82020, #f4e810 18%, #18a048 33%, #18a8d8 50%, #203090 65%, #d02080 82%, #f02828);

i {
    display: block;
    margin-left: auto;
    width: 5px;
    height: 11px;
    background: linear-gradient(#fff 45%, #000 45%);
}
`;
const Split = styled.div`
height: ${(p) => p.$height}px;
flex: none;
display: flex;
`;
const List = styled.div`
flex: 1;
`;
const ScrollBar = styled.div`
width: 9px;
`;
const Snapshot = styled.div`
height: 14.5px;
display: flex;
align-items: flex-start;
border-bottom: 1.5px solid #222;
background: linear-gradient(#222, #222) 0 9px / 100% 1px no-repeat, linear-gradient(#fff, #fff) 0 10px / 100% 3px no-repeat;
overflow: hidden;

b { width: 23px; height: 8px; background: #000; margin: 0 3px 0 2px; }
span { font: 10px/9px "Liberation Sans", sans-serif; margin-top: -1px; }
`;
const SnapBox = styled.div`
width: 16px;
height: 11px;
padding-left: 3px;
margin-top: -3px;
`;
const State = styled.div`
position: relative;
height: 14.5px;
display: flex;
align-items: center;
border-bottom: 1px solid #fff;
background: ${(p) => p.$on ? '#316ac5' : '#ece9d8'};
color: ${(p) => p.$on ? '#fff' : '#111'};

> svg { margin: 0 6px 0 6px; }
`;
const Pointer = styled.div`
width: 6px;
margin: 0 -5px 0 -1px;
`;
const Check = styled.div`
width: 16px;
height: 14px;
background: #ece9d8;
border: 1px solid #fff;
border-right: 1px solid #444;
`;
const Footer = styled.div`
flex: 1;
display: flex;
align-items: center;
justify-content: flex-end;
gap: ${(p) => p.$gap + 1.5}px;
padding-right: 15px;
border-top: 1px solid #777;
`;
const LayerOptions = styled.div`
height: 18px;
flex: none;
display: flex;
align-items: center;
justify-content: space-between;
padding: 0 2px;
border-bottom: 1px solid #c8c4b4;
`;
const Select = styled.div`
width: 59px;
height: 14px;
display: flex;
justify-content: space-between;
padding: 0 1px 0 5px;
background: linear-gradient(90deg, #fff 46px, #eeebdf 46px);
border: 1px solid #c8c6b8;
color: #a8a598;
`;
const Dim = styled.span`
color: #aaa79a;
font-size: 9px;
`;
const Percent = styled.div`
width: 42px;
height: 14px;
padding: 0 3px 0 2px;
display: flex;
justify-content: space-between;
border: 1px solid #c8c6b8;
font: 9px/12px "DejaVu Sans", sans-serif;
letter-spacing: -.3px;
color: #aaa79a;

i { font-style: normal; }
`;
const LockIcons = styled.div`
display: flex;
gap: 5px;
`;
const Layer = styled.div`
height: 18px;
display: flex;
align-items: center;
color: #fff;
background: #316ac5;
border-top: 1px solid #222;
border-bottom: 1px solid #222;

b { width: 24px; height: 12px; margin: 0 2px; background: #000; border: 1px solid #d8e0f0; }
> svg { margin: 0 1px 0 auto; }
`;
const Cell = styled.div`
width: 16.5px;
height: 16px;
padding: 2px;
background: #ece9d8;
border-right: 1px solid #555;
`;
const Bubble = styled.div`
position: absolute;
left: -21px;
top: 457px;
width: 35px;
height: 35px;
padding-left: 20px;
border: 1.5px solid #d8f4d8;
border-radius: 50%;
background: radial-gradient(#3cc058, #48cc60);
box-shadow: 0 1px 4px #333;
color: #fff;
font: bold 8.5px/31px "DejaVu Sans", sans-serif;
letter-spacing: -.5px;
`;
const Ime = styled.div`
position: absolute;
left: 0;
top: 521px;
width: 121px;
height: 19px;
display: flex;
align-items: center;
gap: 1px;
padding-left: 4px;
background: #f0eee4;
border: solid #888;
border-width: 1px 1px 1px 0;
`;
const ImeText = styled.span`
color: ${(p) => p.$color};
width: 13px;
flex: none;
font: 12px/14px "Noto Sans CJK SC", sans-serif;
`;
const Mark = styled.div`
position: absolute;
left: 765px;
top: 445px;
opacity: .76;
`;
